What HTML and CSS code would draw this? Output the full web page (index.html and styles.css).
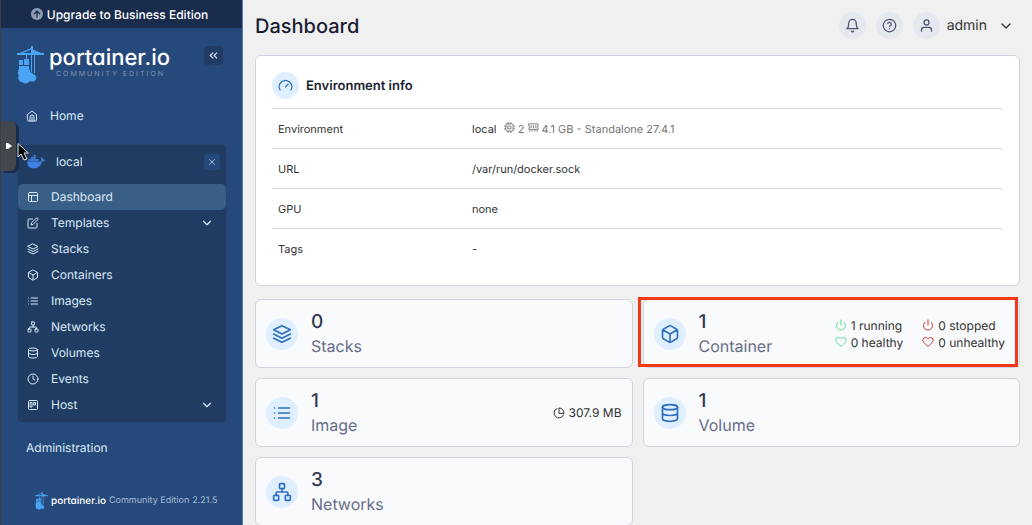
FILE: index.html
```html
<!DOCTYPE html>
<html lang="en">
<head>
<meta charset="utf-8">
<title>Dashboard - Portainer</title>
<link rel="stylesheet" href="styles.css">
</head>
<body>
<svg class="sprite" aria-hidden="true">
  <symbol id="i-up" viewBox="0 0 24 24"><circle cx="12" cy="12" r="12" fill="#8f9bb3" stroke="none"/><path d="M12 18V6M6.500 11.500 12 6l5.500 5.500" stroke="#192c4c" stroke-width="2.500"/></symbol>
  <symbol id="i-collapse" viewBox="0 0 24 24"><path d="m11 17-5-5 5-5M18 17l-5-5 5-5"/></symbol>
  <symbol id="i-home" viewBox="0 0 24 24"><path d="M3 9l9-7 9 7v11a2 2 0 0 1-2 2H5a2 2 0 0 1-2-2zM8 22v-8a4 4 0 0 1 8 0v8M12 14v8"/></symbol>
  <symbol id="i-x" viewBox="0 0 24 24"><path d="M18 6 6 18M6 6l12 12"/></symbol>
  <symbol id="i-layout" viewBox="0 0 24 24"><rect x="3" y="3" width="18" height="18" rx="2"/><path d="M3 9h18M9 21V9"/></symbol>
  <symbol id="i-edit" viewBox="0 0 24 24"><path d="M11 4H4a2 2 0 0 0-2 2v14a2 2 0 0 0 2 2h14a2 2 0 0 0 2-2v-7"/><path d="M18.500 2.500a2.120 2.120 0 0 1 3 3L12 15l-4 1 1-4z"/></symbol>
  <symbol id="i-layers" viewBox="0 0 24 24"><path d="m12 2 10 5-10 5L2 7zM2 17l10 5 10-5M2 12l10 5 10-5"/></symbol>
  <symbol id="i-box" viewBox="0 0 24 24"><path d="M21 16V8a2 2 0 0 0-1-1.730l-7-4a2 2 0 0 0-2 0l-7 4A2 2 0 0 0 3 8v8a2 2 0 0 0 1 1.730l7 4a2 2 0 0 0 2 0l7-4A2 2 0 0 0 21 16zM3.270 6.960 12 12l8.730-5.040M12 22V12"/></symbol>
  <symbol id="i-list" viewBox="0 0 24 24"><path d="M8 6h13M8 12h13M8 18h13M3 6h.01M3 12h.01M3 18h.01"/></symbol>
  <symbol id="i-network" viewBox="0 0 24 24"><rect x="16" y="16" width="6" height="6" rx="1"/><rect x="2" y="16" width="6" height="6" rx="1"/><rect x="9" y="2" width="6" height="6" rx="1"/><path d="M5 16v-3a1 1 0 0 1 1-1h12a1 1 0 0 1 1 1v3M12 12V8"/></symbol>
  <symbol id="i-database" viewBox="0 0 24 24"><ellipse cx="12" cy="5" rx="9" ry="3"/><path d="M21 12c0 1.660-4 3-9 3s-9-1.340-9-3M3 5v14c0 1.660 4 3 9 3s9-1.340 9-3V5"/></symbol>
  <symbol id="i-clock" viewBox="0 0 24 24"><circle cx="12" cy="12" r="10"/><path d="M12 6v6l4 2"/></symbol>
  <symbol id="i-trello" viewBox="0 0 24 24"><rect x="3" y="3" width="18" height="18" rx="2"/><path d="M7 7h3v9H7zM14 7h3v5h-3z"/></symbol>
  <symbol id="i-down" viewBox="0 0 24 24"><path d="m6 9 6 6 6-6"/></symbol>
  <symbol id="i-bell" viewBox="0 0 24 24"><path d="M6 8a6 6 0 0 1 12 0c0 7 3 9 3 9H3s3-2 3-9M10.300 21a1.940 1.940 0 0 0 3.400 0"/></symbol>
  <symbol id="i-help" viewBox="0 0 24 24"><circle cx="12" cy="12" r="10"/><path d="M9.090 9a3 3 0 0 1 5.830 1c0 2-3 3-3 3M12 17h.01"/></symbol>
  <symbol id="i-user" viewBox="0 0 24 24"><path d="M20 21v-2a4 4 0 0 0-4-4H8a4 4 0 0 0-4 4v2"/><circle cx="12" cy="7" r="4"/></symbol>
  <symbol id="i-gauge" viewBox="0 0 24 24"><path d="m12 14 4-4M3.340 19a10 10 0 1 1 17.320 0"/></symbol>
  <symbol id="i-cpu" viewBox="0 0 24 24"><rect x="4" y="4" width="16" height="16" rx="3"/><rect x="9" y="9" width="6" height="6"/><path d="M9 1v3M15 1v3M9 20v3M15 20v3M20 9h3M20 15h3M1 9h3M1 15h3"/></symbol>
  <symbol id="i-memory" viewBox="0 0 24 24"><path d="M2 4h20v4a2 2 0 0 0 0 4v4H2v-4a2 2 0 0 0 0-4zM7 8v4M12 8v4M17 8v4M4 17v3M9 17v3M15 17v3M20 17v3"/></symbol>
  <symbol id="i-pie" viewBox="0 0 24 24"><path d="M21.210 15.890A10 10 0 1 1 8 2.830M22 12A10 10 0 0 0 12 2v10z"/></symbol>
  <symbol id="i-power" viewBox="0 0 24 24"><path d="M18.360 6.640a9 9 0 1 1-12.730 0M12 2v10"/></symbol>
  <symbol id="i-heart" viewBox="0 0 24 24"><path d="M20.840 4.610a5.500 5.500 0 0 0-7.780 0L12 5.670l-1.060-1.060a5.500 5.500 0 0 0-7.780 7.780L12 21.230l8.840-8.840a5.500 5.500 0 0 0 0-7.780z"/></symbol>
  <symbol id="i-whale" viewBox="0 0 36 28"><g fill="#3f7fe0" stroke="none"><path d="M0 13h26c2 0 3-1 3-3-2-2-1-5 0-6 2 1 3 3 3 5 2-.5 3 0 4 1-1 2-3 3-6 3-2 8-8 14-17 14C5 27 0 21 0 13z"/><path d="M3 8h4.500v4.500H3zM8 8h4.500v4.500H8zM13 8h4.500v4.500H13zM18 8h4.500v4.500H18zM8 4h4.500v3.500H8zM13 4h4.500v3.500H13zM13 0h4.500v3.500H13z"/></g></symbol>
  <symbol id="i-crane" viewBox="0 0 27 38"><g fill="#4aa5f5" stroke="none"><path d="M14 0h2v7h11v2H18v18h-1V9h-2v17h-1V9H10v5H9V9H0V7h3l11-5zM14 3.500 6 7h8zM16 3.500V7h8z" fill-rule="evenodd"/><path d="M7 13h5v6H7zM2 14h4v5H2zM2 20h4.500v5H2zM7.500 20H12v5H7.500z"/><path d="M1 27c0-6 3-7 6-7 4 0 6 3 6 6l-1 4H3c-2-1-2-2-2-3z"/><path d="M3 28c3-1 5 0 6-1 3-2 6-1 7 1 3 1 4 3 3 5-1 3-4 3-6 2-2 3-6 3-8 1-4 0-5-6-2-8z"/></g></symbol>
</svg>

<div class="app">
  <aside class="sidebar">
    <a class="upgrade" href="#"><svg class="icon"><use href="#i-up"/></svg>Upgrade to Business Edition</a>
    <header class="brand">
      <svg class="brand-mark"><use href="#i-crane"/></svg>
      <div class="brand-words">
        <span class="brand-name">portainer.io</span>
        <span class="brand-edition">COMMUNITY EDITION</span>
      </div>
      <button class="collapse" aria-label="Collapse sidebar"><svg class="icon"><use href="#i-collapse"/></svg></button>
    </header>
    <nav class="nav">
      <a class="nav-item" href="#"><svg class="icon"><use href="#i-home"/></svg>Home</a>
      <section class="environment">
        <div class="environment-head">
          <svg class="whale"><use href="#i-whale"/></svg><span>local</span>
          <button class="close" aria-label="Close environment"><svg class="icon"><use href="#i-x"/></svg></button>
        </div>
        <a class="nav-item active" href="#"><svg class="icon"><use href="#i-layout"/></svg>Dashboard</a>
        <a class="nav-item" href="#"><svg class="icon"><use href="#i-edit"/></svg>Templates<svg class="chevron"><use href="#i-down"/></svg></a>
        <a class="nav-item" href="#"><svg class="icon"><use href="#i-layers"/></svg>Stacks</a>
        <a class="nav-item" href="#"><svg class="icon"><use href="#i-box"/></svg>Containers</a>
        <a class="nav-item" href="#"><svg class="icon"><use href="#i-list"/></svg>Images</a>
        <a class="nav-item" href="#"><svg class="icon"><use href="#i-network"/></svg>Networks</a>
        <a class="nav-item" href="#"><svg class="icon"><use href="#i-database"/></svg>Volumes</a>
        <a class="nav-item" href="#"><svg class="icon"><use href="#i-clock"/></svg>Events</a>
        <a class="nav-item" href="#"><svg class="icon"><use href="#i-trello"/></svg>Host<svg class="chevron"><use href="#i-down"/></svg></a>
      </section>
      <div class="nav-title">Administration</div>
    </nav>
    <footer class="version">
      <svg class="version-mark"><use href="#i-crane"/></svg>
      <span class="version-name">portainer.io</span>
      <span>Community Edition</span>
      <span>2.21.5</span>
    </footer>
    <button class="drawer" aria-label="Open side drawer"><svg viewBox="0 0 6 8"><path d="M0 1h2l4 3-4 3H0z"/></svg></button>
    <svg class="pointer" viewBox="0 0 12 18"><path d="M1 1v13l3-3 3 6 3-1-3-6h4z"/></svg>
  </aside>

  <main class="main">
    <div class="breadcrumb">Environment summary</div>
    <header class="topbar">
      <h1>Dashboard</h1>
      <div class="actions">
        <button class="round" aria-label="Notifications"><svg class="icon"><use href="#i-bell"/></svg></button>
        <button class="round" aria-label="Help"><svg class="icon"><use href="#i-help"/></svg></button>
        <button class="account"><span class="round"><svg class="icon"><use href="#i-user"/></svg></span>admin<svg class="chevron"><use href="#i-down"/></svg></button>
      </div>
    </header>

    <section class="panel">
      <h2><span class="panel-icon"><svg class="icon"><use href="#i-gauge"/></svg></span>Environment info</h2>
      <table>
        <tr><th scope="row">Environment</th><td>local <span class="specs"><svg class="icon"><use href="#i-cpu"/></svg> 2 <svg class="icon"><use href="#i-memory"/></svg> 4.1 GB - Standalone 27.4.1</span></td></tr>
        <tr><th scope="row">URL</th><td>/var/run/docker.sock</td></tr>
        <tr><th scope="row">GPU</th><td>none</td></tr>
        <tr><th scope="row">Tags</th><td>-</td></tr>
      </table>
    </section>

    <div class="tiles">
      <a class="tile" href="#"><span class="tile-icon"><svg class="icon"><use href="#i-layers"/></svg></span><span class="tile-text"><span class="count">0</span><span class="label">Stacks</span></span></a>
      <a class="tile highlighted" href="#"><span class="tile-icon"><svg class="icon"><use href="#i-box"/></svg></span><span class="tile-text"><span class="count">1</span><span class="label">Container</span></span>
        <span class="status">
          <span><svg class="icon good"><use href="#i-power"/></svg>1 running</span><span><svg class="icon bad"><use href="#i-power"/></svg>0 stopped</span>
          <span><svg class="icon good"><use href="#i-heart"/></svg>0 healthy</span><span><svg class="icon bad"><use href="#i-heart"/></svg>0 unhealthy</span>
        </span></a>
      <a class="tile" href="#"><span class="tile-icon"><svg class="icon"><use href="#i-list"/></svg></span><span class="tile-text"><span class="count">1</span><span class="label">Image</span></span><span class="size"><svg class="icon"><use href="#i-pie"/></svg>307.9 MB</span></a>
      <a class="tile" href="#"><span class="tile-icon"><svg class="icon"><use href="#i-database"/></svg></span><span class="tile-text"><span class="count">1</span><span class="label">Volume</span></span></a>
      <a class="tile" href="#"><span class="tile-icon"><svg class="icon"><use href="#i-network"/></svg></span><span class="tile-text"><span class="count">3</span><span class="label">Networks</span></span></a>
    </div>
  </main>
</div>
</body>
</html>
```
FILE: styles.css
```css
* { box-sizing: border-box; }
body { margin: 0; font-family: Inter, "Liberation Sans", sans-serif; font-size: 12px; text-rendering: geometricPrecision; background: #f0f0f0; color: #333; overflow: hidden; }
button { font: inherit; color: inherit; border: 0; padding: 0; background: none; display: flex; align-items: center; justify-content: center; text-rendering: inherit; }
a { color: inherit; text-decoration: none; }
svg { flex: none; fill: none; stroke: currentColor; stroke-width: 2; stroke-linecap: round; stroke-linejoin: round; }
.sprite { position: absolute; width: 0; height: 0; }
.icon, .chevron { width: 12px; height: 12px; }
.chevron { margin-left: auto; width: 14px; height: 14px; }

.app { display: grid; grid-template-columns: 243px minmax(0, 1fr); height: 100vh; }

.sidebar { position: relative; display: flex; flex-direction: column; background: #25497b; color: #d9e8f5; border-left: 1px solid #3e3e40; border-right: 1px solid #5180b8; }
.upgrade { display: flex; align-items: center; justify-content: center; gap: 4px; height: 29px; padding-right: 4px; background: #192c4c; border-bottom: 1px solid #214779; color: #fff; font-weight: 500; }
.brand { display: flex; padding: 17px 19px 0 16px; height: 74px; }
.brand-mark { width: 27px; height: 38px; }
.brand-words { display: flex; flex-direction: column; padding-left: 5px; }
.brand-name, .version-name { font-feature-settings: "cv11"; font-weight: 500; color: #fff; }
.brand-name { font-size: 22px; line-height: 24px; }
.brand-edition { padding-left: 7px; font-size: 7px; line-height: 8px; letter-spacing: 2px; color: #8095b3; }
.collapse { width: 19px; height: 19px; margin-left: auto; border-radius: 4px; background: #203c63; }
.collapse .icon { width: 13px; height: 13px; }

.nav { padding: 0 15px 0 16px; }
.nav-item { display: flex; align-items: center; gap: 12px; height: 26px; padding: 0 12px 0 9px; border-radius: 5px; line-height: 16px; }
.nav-item.active { background: #395f87; }
.environment { margin-top: 15px; padding-bottom: 4px; border: 1px dotted #2b527f; border-radius: 5px; background: #203c63; }
.environment-head { display: flex; align-items: center; height: 39px; padding: 0 6px 6px 9px; }
.environment-head span { margin-left: 11px; }
.whale { width: 18px; height: 14px; }
.close { width: 16px; height: 16px; margin-left: auto; border-radius: 3px; background: #25497b; color: #b5cbe3; }
.close .icon { width: 10px; height: 10px; }
.nav-title { padding: 17px 9px 0; line-height: 16px; }
.version { display: flex; align-items: center; gap: 3px; margin-top: auto; padding: 0 0 15px 34px; font-size: 9px; line-height: 18px; color: #a3bbd4; }
.version-mark { width: 13px; height: 18px; }
.version-name { font-size: 10px; }

.drawer { position: absolute; left: 0; top: 121px; width: 15px; height: 50px; background: #42464d; border-radius: 0 6px 6px 0; box-shadow: 3px 2px 0 #182c4b; }
.drawer svg { width: 6px; height: 8px; fill: #fff; stroke: none; }
.pointer { position: absolute; left: 16px; top: 143px; width: 12px; height: 18px; fill: #050505; stroke: #ddd; stroke-width: 1; }

.main { padding: 0 12px; overflow: hidden; }
.breadcrumb { margin-top: -12px; height: 15px; font-size: 10px; line-height: 15px; color: #686e87; }
.topbar { display: flex; align-items: center; justify-content: space-between; height: 52px; padding-bottom: 7px; }
h1 { margin: 0; font-size: 20px; line-height: 24px; font-weight: 500; color: #1b1e33; }
.actions { display: flex; align-items: center; gap: 10px; padding-right: 6px; }
.round { display: flex; align-items: center; justify-content: center; width: 27px; height: 27px; border-radius: 50%; background: #e6e8ef; color: #4a5370; }
.round .icon { width: 15px; height: 15px; }
.account { gap: 7px; font-size: 14px; }
.account .chevron { margin-left: 4px; width: 16px; height: 16px; }

.panel { padding: 16px 16px 17px; border: 1px solid #d0d3df; border-radius: 6px; background: #fff; }
h2 { display: flex; align-items: center; gap: 7px; margin: 0 0 9px; font-size: 13px; line-height: 16px; font-weight: 600; color: #1b1e33; }
.panel-icon { display: flex; align-items: center; justify-content: center; width: 27px; height: 27px; border-radius: 50%; background: #e0efff; color: #2d77c9; }
.panel-icon .icon { width: 15px; height: 15px; }
table { width: 100%; border-spacing: 0; font-size: 11px; line-height: 16px; }
th, td { height: 40px; padding: 1px 6px 0; border-top: 1px solid #dcdcdc; font-weight: 400; text-align: left; }
th { width: 194px; }
.specs { margin-left: 4px; color: #767676; }
.specs .icon { width: 11px; height: 11px; }

.tiles { display: grid; grid-template-columns: 1fr 1fr; gap: 10px; margin-top: 13px; }
.tile { position: relative; display: flex; align-items: center; height: 69px; padding: 0 10px; border: 1px solid #d0d3df; border-radius: 6px; background: #f9fafc; }
.tile-icon { display: flex; align-items: center; justify-content: center; width: 32px; height: 32px; border-radius: 50%; background: #e0efff; color: #2d6fc0; }
.tile-icon .icon { width: 20px; height: 20px; }
.tile-text { display: flex; flex-direction: column; margin-left: 13px; }
.count { font-size: 19px; line-height: 24px; font-weight: 500; color: #343850; }
.label { font-size: 16px; line-height: 24px; color: #686e87; }
.size, .status span { display: flex; align-items: center; gap: 4px; }
.size { margin-left: auto; }
.status { display: grid; grid-template-columns: auto auto; column-gap: 19px; margin-left: auto; padding-right: 4px; line-height: 17px; }
.good { color: #5bdc8e; }
.bad { color: #bf3b2d; }
.highlighted::after { content: ""; position: absolute; left: -6px; top: -3px; right: 1px; bottom: 0; border: 3px solid #f03a17; }
```
